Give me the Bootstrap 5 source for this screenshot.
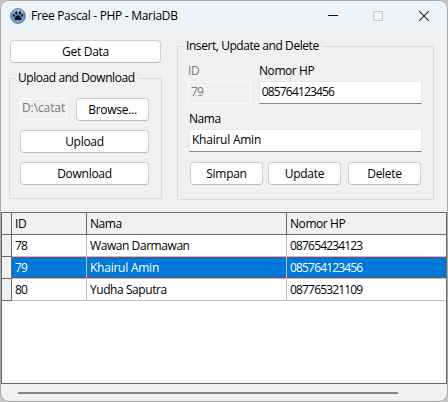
<!DOCTYPE html>
<html lang="id">
<head>
<meta charset="utf-8">
<meta name="viewport" content="width=device-width, initial-scale=1">
<title>Free Pascal - PHP - MariaDB</title>
<link href="https://cdn.jsdelivr.net/npm/bootstrap@5.3.0/dist/css/bootstrap.min.css" rel="stylesheet">
<style>
body{width:448px;height:402px;background:#c6c6c6;font:12px/16px "Open Sans","Noto Sans",sans-serif;letter-spacing:-.43px;color:#000;cursor:default}
.win{height:402px;border:1px solid #a9a9a9;border-radius:9px;background:#f0f0f0}
.titlebar{height:30px;background:#ecf3f6;padding:0 16px 0 9px}
.titlebar .caption{margin-left:5px;letter-spacing:-.3px}
.work{padding:9px 13px 0 8px;height:181px;gap:15px}
.leftcol{width:154px}
.btn-win{--bs-btn-font-size:12px;--bs-btn-line-height:16px;--bs-btn-padding-x:0;--bs-btn-padding-y:0;--bs-btn-bg:#fdfdfd;--bs-btn-border-color:#d0d0d0;--bs-btn-border-radius:4px;--bs-btn-color:#000;height:23px;letter-spacing:-.28px;border-bottom-color:#bcbcbc;padding-top:1px}
.w-get{width:151px;margin-left:1px}
.w-side{width:73px}
.stack{margin-top:9px}
.group{border:1px solid #dcdcdc;position:relative}
.group-title{position:absolute;top:-9px;left:5px;padding:0 3px;background:#f0f0f0;white-space:nowrap}
.g-files{height:121px;margin-top:15px;padding:19px 12px 0 10px}
.g-edit{width:257px;height:154px;margin-top:6px;padding:16px 11px 0 10px}
.field{height:23px;background:#fff;border:1px solid #e8e8e8;border-bottom-color:#868686;padding:2px 2px 0;white-space:nowrap;overflow:hidden}
.field.off{background:#f0f0f0;border-color:#fafafa;color:#7c7c7c}
.field.id{width:63px;border-bottom-color:#f8f8f8}
.field.path{width:47px;height:22px;padding:1px 1px 0;letter-spacing:-.1px}
.field.hp{width:164px}
.field.nama{width:233px;margin:2px 0 0 1px}
.num{letter-spacing:-.83px}
.wide{letter-spacing:-.24px}
.dim{color:#7c7c7c}
.lab-id{width:71px}
.hprow{margin-top:2px}
.namelab{margin-top:7px;padding-left:1px}
.acts{margin:10px 0 0 2px;gap:5px}
.acts .btn:last-child{margin-left:2px}
.gridbox{height:172px;background:#fff;border:1px solid #696969}
.grid-t{width:444px;table-layout:fixed;border-collapse:separate;border-spacing:0}
.grid-t .c-mark{width:10px}
.grid-t .c-id{width:75px}
.grid-t .c-nama{width:200px}
.grid-t th,.grid-t td{height:22px;padding:0 0 0 3px;font-weight:400;vertical-align:middle;border-right:1px solid #c0c0c0;border-bottom:1px solid #c0c0c0;white-space:nowrap}
.grid-t thead th{background:#f0f0f0;border-color:#696969}
.grid-t tbody th{background:#f0f0f0;border-color:#696969;padding:0}
.grid-t tr>:last-child{border-right:0}
.grid-t .sel td{background:linear-gradient(#0078d7,#0078d7) padding-box;color:#fff;position:relative}
.grid-t .sel td::before,.grid-t .sel td::after{content:"";position:absolute;left:0;right:0;height:1px;background:repeating-linear-gradient(90deg,#f01818 0 1px,#0078d7 1px 2px)}
.grid-t .sel td::before{top:0}
.grid-t .sel td::after{bottom:0}
.track{height:17px;padding:8px 49px 0 17px}
.thumb{height:2px;background:#868686}
</style>
<script src="https://cdn.jsdelivr.net/npm/bootstrap@5.3.0/dist/js/bootstrap.bundle.min.js"></script>
</head>
<body class="overflow-hidden">
<main class="win overflow-hidden">
  <header class="titlebar d-flex align-items-center">
    <svg width="16" height="16" viewBox="0 0 16 16">
      <defs><linearGradient id="orb" x1="0" y1="0" x2="0" y2="1"><stop offset="0" stop-color="#b9c4d6"/><stop offset=".45" stop-color="#6f93c4"/><stop offset="1" stop-color="#63b4f2"/></linearGradient></defs>
      <circle cx="8" cy="8" r="7.4" fill="url(#orb)" stroke="#5d6d86" stroke-width=".9"/>
      <g fill="#050b16"><ellipse cx="6.300" cy="4.800" rx="1.1" ry="1.6"/><ellipse cx="9.900" cy="4.800" rx="1.1" ry="1.6"/><ellipse cx="3.900" cy="7.500" rx="1" ry="1.4" transform="rotate(-20 3.900 7.500)"/><ellipse cx="12.200" cy="7.400" rx="1" ry="1.4" transform="rotate(20 12.200 7.400)"/><path d="M8 7.3c1.5 0 1.900 1.300 2.900 2.200 1.100 1 .6 2.700-.8 2.700-.8 0-1.300-.4-2.100-.4s-1.300.4-2.100.4c-1.400 0-1.900-1.700-.8-2.700C6.100 8.600 6.500 7.300 8 7.300z"/></g>
    </svg>
    <span class="caption">Free Pascal - PHP - MariaDB</span>
    <svg class="ms-auto" width="104" height="12" viewBox="0 0 104 12" fill="none">
      <path d="M1 5.500h10" stroke="#111"/>
      <rect x="46.500" y="1.500" width="9" height="9" rx=".5" stroke="#c2c6c9"/>
      <path d="M92.200 1.200l9.600 9.600M101.800 1.200l-9.600 9.600" stroke="#222" stroke-width="1.100"/>
    </svg>
  </header>
  <section class="work d-flex align-items-start">
    <div class="leftcol">
      <button class="btn btn-win w-get d-block">Get Data</button>
      <div class="group g-files">
        <span class="group-title">Upload and Download</span>
        <div class="d-flex justify-content-between">
          <div class="field off path">D:\catat</div>
          <button class="btn btn-win w-side">Browse...</button>
        </div>
        <button class="btn btn-win w-100 stack d-block">Upload</button>
        <button class="btn btn-win w-100 stack d-block">Download</button>
      </div>
    </div>
    <div class="group g-edit">
      <span class="group-title">Insert, Update and Delete</span>
      <div class="d-flex"><span class="dim lab-id">ID</span><span>Nomor HP</span></div>
      <div class="d-flex gap-2 hprow">
        <div class="field off id num">79</div>
        <div class="field hp num">085764123456</div>
      </div>
      <div class="namelab">Nama</div>
      <div class="field nama wide">Khairul Amin</div>
      <div class="d-flex acts">
        <button class="btn btn-win w-side">Simpan</button>
        <button class="btn btn-win w-side">Update</button>
        <button class="btn btn-win w-side">Delete</button>
      </div>
    </div>
  </section>
  <section class="gridbox">
    <table class="grid-t">
      <colgroup><col class="c-mark"><col class="c-id"><col class="c-nama"><col></colgroup>
      <thead><tr><th></th><th>ID</th><th>Nama</th><th>Nomor HP</th></tr></thead>
      <tbody>
        <tr><th></th><td class="num">78</td><td>Wawan Darmawan</td><td class="num">087654234123</td></tr>
        <tr class="sel"><th></th><td class="num">79</td><td class="wide">Khairul Amin</td><td class="num">085764123456</td></tr>
        <tr><th></th><td class="num">80</td><td>Yudha Saputra</td><td class="num">087765321109</td></tr>
      </tbody>
    </table>
  </section>
  <div class="track"><div class="thumb"></div></div>
</main>
</body>
</html>
